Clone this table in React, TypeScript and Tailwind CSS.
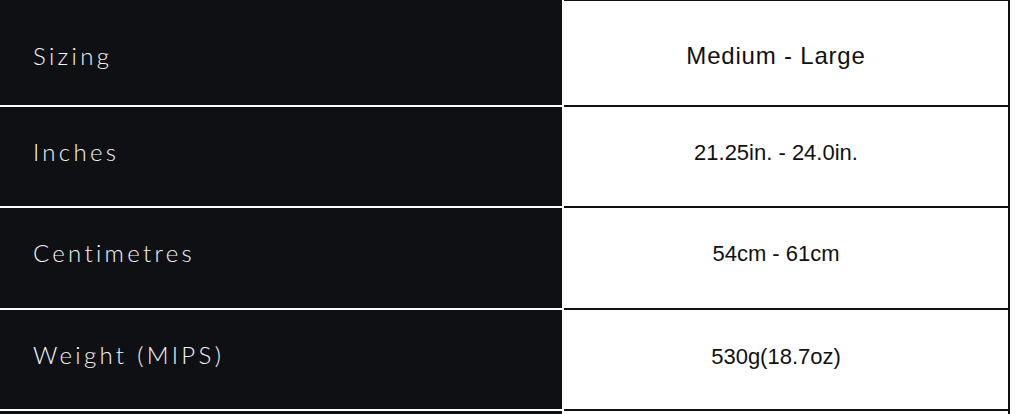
import React from "react";

type Row = {
  label: string;
  value: string;
  height: string;
  labelPad: string;
  valuePad: string;
  valueClass: string;
};

// heights include the 2px bottom rule (border-box)
const rows: Row[] = [
  {
    label: "Sizing",
    value: "Medium - Large",
    height: "h-[107px]",
    labelPad: "pt-[42px]",
    valuePad: "pt-[41px]",
    valueClass: "text-[24px] font-medium tracking-[0.8px]",
  },
  {
    label: "Inches",
    value: "21.25in. - 24.0in.",
    height: "h-[101px]",
    labelPad: "pt-[31px]",
    valuePad: "pt-[32px]",
    valueClass: "text-[22px]",
  },
  {
    label: "Centimetres",
    value: "54cm - 61cm",
    height: "h-[102px]",
    labelPad: "pt-[31px]",
    valuePad: "pt-[32px]",
    valueClass: "text-[22px]",
  },
  {
    label: "Weight (MIPS)",
    value: "530g(18.7oz)",
    height: "h-[101px]",
    labelPad: "pt-[31px]",
    valuePad: "pt-[33px]",
    valueClass: "text-[22px]",
  },
];

function SpecRow({ row, first }: { row: Row; first: boolean }) {
  return (
    <div className="flex">
      <div
        className={`w-[562px] ${row.height} bg-[#0f1014] border-b-2 border-white pl-[33px] ${row.labelPad}`}
      >
        <span className="block font-['Lato','Noto_Sans',sans-serif] font-light text-[24px] leading-[28px] tracking-[3.3px] text-[#f4f4f4]">
          {row.label}
        </span>
      </div>
      <div
        className={`ml-[2px] w-[446px] ${row.height} border-b-2 border-r-2 border-[#111] bg-white pr-[20px] text-center ${row.valuePad} ${
          first ? "border-t" : ""
        }`}
      >
        <span
          className={`block font-['Liberation_Sans','Arial',sans-serif] leading-[28px] text-[#111] ${row.valueClass}`}
        >
          {row.value}
        </span>
      </div>
    </div>
  );
}

export default function App() {
  return (
    <div className="w-[1018px] h-[414px] overflow-hidden bg-white">
      {rows.map((row, i) => (
        <SpecRow key={row.label} row={row} first={i === 0} />
      ))}
      <div className="flex">
        <div className="w-[562px] h-[20px] bg-[#0f1014]" />
        <div className="ml-[2px] w-[446px] h-[20px] border-r-2 border-[#111] bg-white" />
      </div>
    </div>
  );
}
